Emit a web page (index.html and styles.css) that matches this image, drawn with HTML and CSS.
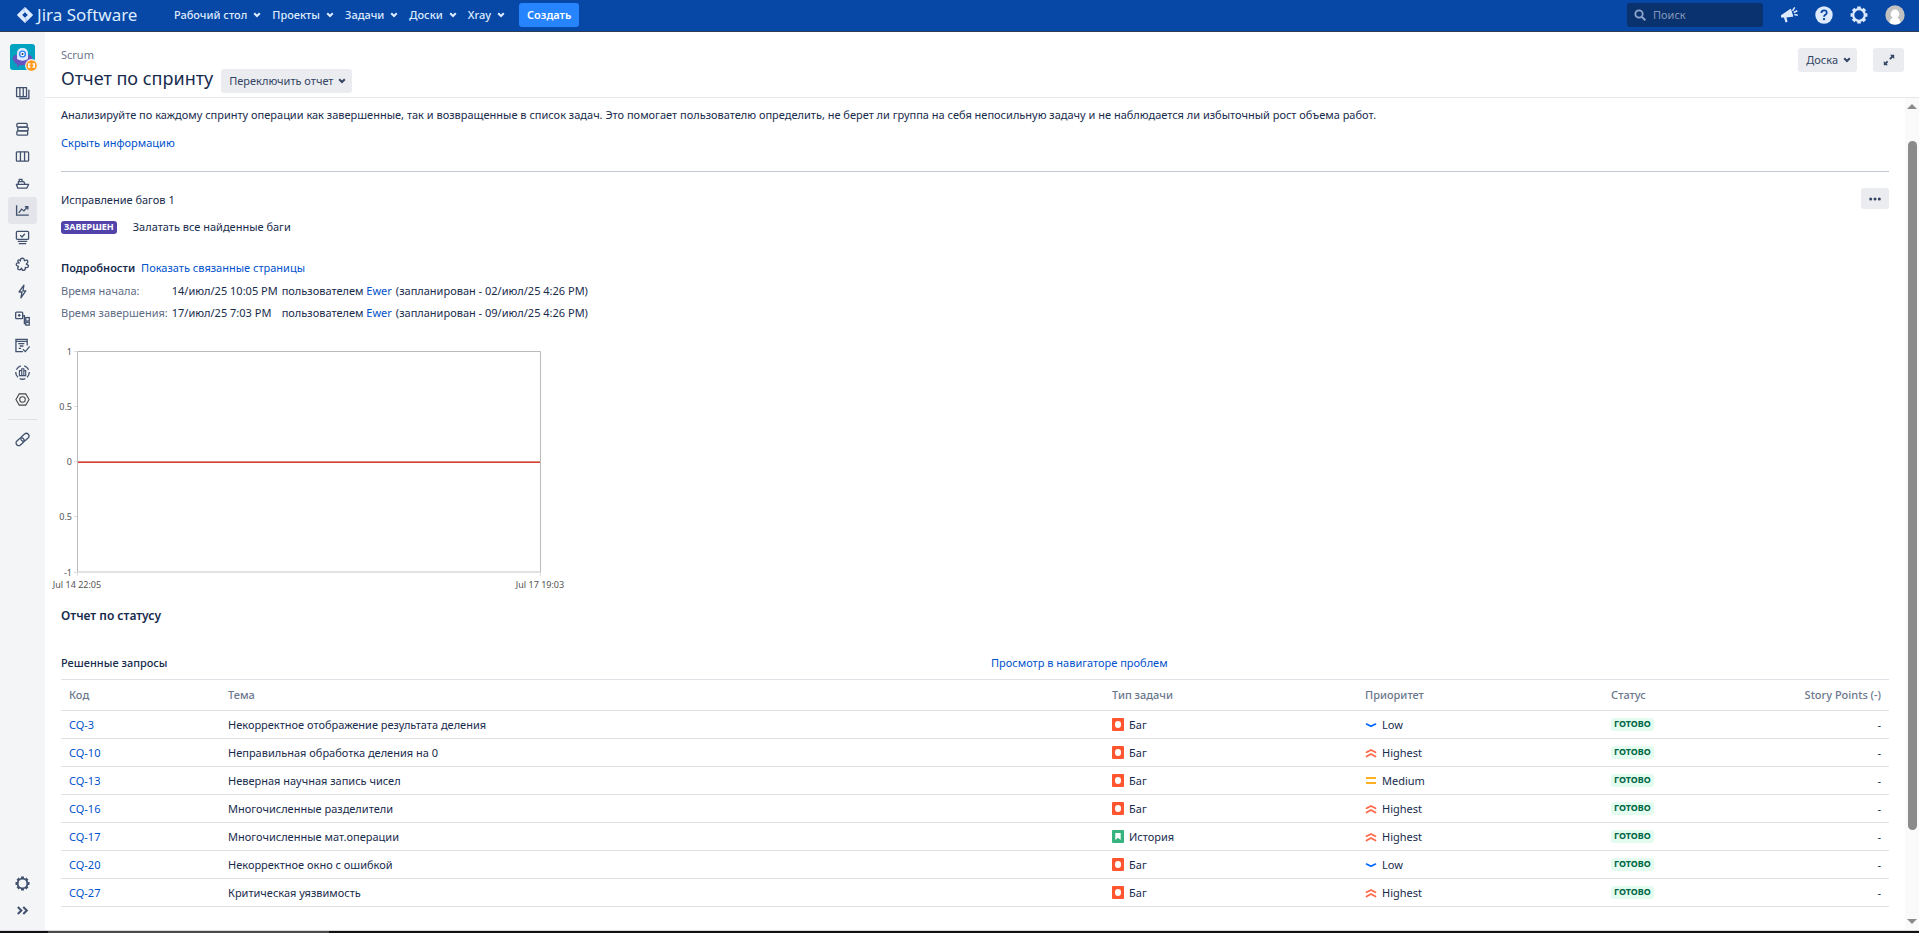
FILE: index.html
```html
<!DOCTYPE html>
<html lang="ru">
<head>
<meta charset="utf-8">
<title>Отчет по спринту - Jira Software</title>
<link rel="stylesheet" href="styles.css">
</head>
<body>
<svg class="defs" aria-hidden="true">
  <symbol id="chevron" viewBox="0 0 8 8"><path d="M1.2 2.2 4 5l2.800-2.800" fill="none" stroke="currentColor" stroke-width="2"/></symbol>
  <symbol id="bug" viewBox="0 0 12 13"><rect width="12" height="13" rx="1" fill="#ff5630"/><rect x="3" y="3" width="6" height="7" rx="3" fill="#fff"/></symbol>
  <symbol id="story" viewBox="0 0 12 13"><rect width="12" height="13" rx="1" fill="#36b37e"/><path d="M3.300 3h5.400v7L6 7.700 3.300 10z" fill="#fff"/></symbol>
  <symbol id="low" viewBox="0 0 12 12"><path d="M1.500 5 6 7.300 10.500 5" fill="none" stroke="#0065ff" stroke-width="1.600" stroke-linecap="round" stroke-linejoin="round"/></symbol>
  <symbol id="highest" viewBox="0 0 12 12"><path d="M1.500 5.300 6 2.900l4.500 2.400M1.500 9.500 6 7l4.500 2.500" fill="none" stroke="#ff6747" stroke-width="1.700" stroke-linecap="round" stroke-linejoin="round"/></symbol>
  <symbol id="medium" viewBox="0 0 12 12"><path d="M1 3h10M1 8h10" stroke="#ffb020" stroke-width="2"/></symbol>
  <symbol id="gear" viewBox="0 0 18 18"><circle cx="9" cy="9" r="5.800" fill="none" stroke="currentColor" stroke-width="2.200"/><g stroke="currentColor" stroke-width="3.600"><path d="M9 .6v2.200M9 15.200v2.200M.6 9h2.200M15.200 9h2.200M3.100 3.100l1.500 1.500M13.400 13.400l1.500 1.500M14.900 3.100l-1.500 1.500M4.600 13.400l-1.500 1.500"/></g></symbol>
</svg>

<header class="topbar">
  <a class="logo" href="#"><svg width="16" height="16" viewBox="0 0 16 16"><path fill="#deebff" fill-rule="evenodd" d="M8 0l7.500 7.300q.7.700 0 1.400L8 16 .5 8.700q-.7-.7 0-1.400zM8 5.200 5.200 8 8 10.800 10.800 8z"/><path d="M8 .5q-3 2.700 0 5M8 15.500q3-2.700 0-5" stroke="#8db3ee" fill="none" stroke-width=".8"/></svg><span>Jira Software</span></a>
  <nav class="menu">
    <button>Рабочий стол<svg><use href="#chevron"/></svg></button>
    <button>Проекты<svg><use href="#chevron"/></svg></button>
    <button>Задачи<svg><use href="#chevron"/></svg></button>
    <button>Доски<svg><use href="#chevron"/></svg></button>
    <button>Xray<svg><use href="#chevron"/></svg></button>
  </nav>
  <button class="create">Создать</button>
  <div class="tools">
    <label class="search"><svg viewBox="0 0 12 12"><circle cx="5" cy="5" r="3.700" fill="none" stroke="currentColor" stroke-width="1.800"/><path d="m8 8 3.300 3.300" stroke="currentColor" stroke-width="2"/></svg><input type="text" placeholder="Поиск" aria-label="Поиск"></label>
    <button class="tool" aria-label="Обратная связь"><svg viewBox="0 0 18 18"><path fill="currentColor" d="M1 9.200 10.200 3q.8-.4 1 .4l2 6.500q.1.800-.8.900l-6 .7 1.200 4.200-2 .7-1.700-4.800-2.200.2q-1.200-.800-.7-2.600z"/><path d="m12.500 4.800 2.200-3.400M13.700 6.500l3.600-1.700M14.300 8.500l3.500.8" stroke="currentColor" stroke-width="1.500"/></svg></button>
    <button class="tool" aria-label="Справка"><svg viewBox="0 0 18 18"><circle cx="9" cy="9" r="8.700" fill="currentColor"/><path d="M6.400 7q0-2.700 2.700-2.700T11.700 7c0 1.800-2.700 1.800-2.700 3.700" fill="none" stroke="#0747a6" stroke-width="1.800"/><circle cx="9" cy="13.100" r="1.200" fill="#0747a6"/></svg></button>
    <button class="tool" aria-label="Администрирование"><svg><use href="#gear"/></svg></button>
    <button class="tool user" aria-label="Профиль"><svg viewBox="0 0 20 20"><circle cx="10" cy="10" r="9.700" fill="#c1c1c1"/><circle cx="10" cy="9" r="4.400" fill="#fff"/><path d="M4.500 18q.5-4.500 3.500-5.500h4q3 1 3.500 5.500-5.500 3.200-11 0z" fill="#fff"/></svg></button>
  </div>
</header>

<div class="shell">
  <aside class="sidebar">
    <a class="project" href="#" aria-label="Scrum"><svg viewBox="0 0 25 26"><rect width="25" height="26" rx="3" fill="#00a3bf"/><path d="M2.500 14q1-4 10-4t10 4q-1 5-5 6.500l1 2-1.500.5-1.500-2q-3 .6-6 0L8 23l-1.500-.5 1-2q-4-1.500-5-6.500z" fill="#6554c0"/><path d="M7 15V9.500Q7 4 12.500 4T18 9.500V15q-5.500 3.500-11 0z" fill="#deebff"/><circle cx="12.500" cy="10" r="3.600" fill="#2684ff"/><circle cx="12.500" cy="10" r="2.200" fill="#fff"/><circle cx="12.500" cy="10" r="1" fill="#253858"/><circle cx="21.500" cy="21.500" r="6.400" fill="#f4f5f7"/><circle cx="21.500" cy="21.500" r="5.300" fill="#ff991f"/><path d="M20.500 20h-1.800v3h1.800M22.500 20h1.800v3h-1.800" fill="none" stroke="#fff"/></svg></a>
    <nav class="side-nav">
      <a class="boards" href="#" aria-label="Доски проекта"><svg viewBox="0 0 16 16"><path d="M1.700 1.700h10.600v9.600H1.700zM5.200 2v9M8.800 2v9M14.800 4v9.300H4.500" stroke-linejoin="round"/></svg></a>
      <a href="#" aria-label="Бэклог"><svg viewBox="0 0 16 16"><rect x="2" y="1.500" width="11" height="4" rx="1"/><rect x="3" y="5.500" width="11" height="4" rx="1"/><rect x="2" y="9.500" width="11.500" height="4.500" rx="1"/></svg></a>
      <a href="#" aria-label="Активные спринты"><svg viewBox="0 0 16 16"><rect x="1.500" y="3" width="13" height="10" rx="1"/><path d="M5.800 3v10M10.200 3v10"/></svg></a>
      <a href="#" aria-label="Релизы"><svg viewBox="0 0 16 16"><path d="M1.500 9h13l-2 4H3zM3.500 8.500V6h6l1 2.500M4.500 5.500v-2h3v2" stroke-linejoin="round"/></svg></a>
      <a class="active" href="#" aria-label="Отчеты"><svg viewBox="0 0 16 16"><path d="M1.700 2.500V13h13M4 10.500l3-4 2.500 2L13.500 4M10.500 4h3.200v3"/></svg></a>
      <a href="#" aria-label="Задачи"><svg viewBox="0 0 16 16"><rect x="1.500" y="1.500" width="13" height="8.500" rx="1"/><path d="m5.500 5.500 2 2 3-3.500M3 12.200h10M4 14.500h8"/></svg></a>
      <a href="#" aria-label="Дополнения"><svg viewBox="0 0 16 16"><path stroke-linejoin="round" d="M5.800 4.300Q5.500 1.300 7.800 1.300T10 4q3-1.300 3.600.3t-1.600 3.200q2.700.7 2.300 2.500t-3.300 1.200q.300 2.900-1.600 3.100T7 12q-1.800 2.400-3.400 1.400T3.800 10Q1 9.400 1.400 7.600t3-1.200Q2.300 4.400 3.400 3.400t2.400.9z"/></svg></a>
      <a href="#" aria-label="Автоматизация"><svg viewBox="0 0 16 16"><path stroke-linejoin="round" d="M9.500 1.300 4.300 8.500h3.200L6.300 14.700l5.200-7.400H8.500z"/></svg></a>
      <a href="#" aria-label="Компоненты"><svg viewBox="0 0 16 16"><rect x=".7" y="1.200" width="7.500" height="7" rx="1"/><path d="M3 4.700h3M4.500 3.200v3M8.500 5H10v8.500h1.300M10 9h1.300"/><rect x="11.500" y="7" width="3.700" height="3.700"/><rect x="11.500" y="12" width="3.700" height="3"/></svg></a>
      <a href="#" aria-label="Тесты"><svg viewBox="0 0 16 16"><path d="M13 8V1.500H1v13h7.500M1 3.500h12M3.500 6h6.500M5 8.500h4M4 11h2.500M8.500 12l2.500 2.500L15.700 9"/></svg></a>
      <a href="#" aria-label="Тестирование"><svg viewBox="0 0 16 16"><path d="M1.500 5Q3 1.800 6.200.900M9.800.900Q13 1.800 14.500 5M15.300 7.500q0 3.300-2.500 5.500M11 14.600q-3 1.200-6 0M3.200 13Q.7 10.800.7 7.500"/><path d="M4.700 11.300V6h2.500v5.300zM7.200 6V4h2.200v7.300H7.200M9.400 6h2v5.300h-2" stroke-width="1.200"/></svg></a>
      <a href="#" aria-label="Настройки модуля"><svg class="hex" viewBox="0 0 16 16"><path d="M4.500 2h7L15 8l-3.500 6h-7L1 8z"/><circle cx="8" cy="8" r="3"/></svg></a>
    </nav>
    <div class="side-link"><a href="#" aria-label="Ссылки"><svg viewBox="0 0 16 16"><g transform="rotate(-42 8 8)"><rect x="-.3" y="5.200" width="9.600" height="5.600" rx="2.800"/><rect x="6.700" y="5.200" width="9.600" height="5.600" rx="2.800"/></g></svg></a></div>
    <div class="side-foot">
      <a href="#" aria-label="Настройки проекта"><svg><use href="#gear"/></svg></a>
      <a href="#" aria-label="Развернуть"><svg viewBox="0 0 16 16"><path d="m3 4.200 3.800 3.800L3 11.800M8.800 4.200l3.800 3.800-3.800 3.800" stroke-width="2.200"/></svg></a>
    </div>
  </aside>

  <main class="page">
    <header class="page-head">
      <div>
        <a class="crumb" href="#">Scrum</a>
        <div class="title-row"><h1>Отчет по спринту</h1><button class="btn">Переключить отчет<svg><use href="#chevron"/></svg></button></div>
      </div>
      <div class="head-actions">
        <button class="btn">Доска<svg><use href="#chevron"/></svg></button>
        <button class="btn expand" aria-label="На весь экран"><svg viewBox="0 0 12 12"><path d="M7 .8h4.200V5L9.800 3.600 7.600 5.800 6.200 4.400l2.200-2.200zM.8 7v4.200H5L3.600 9.800l1.700-1.700-1.400-1.400-1.700 1.700z" fill="currentColor"/></svg></button>
      </div>
    </header>

    <div class="scroll">
      <div class="report">
        <section class="info">
          <p>Анализируйте по каждому спринту операции как завершенные, так и возвращенные в список задач. Это помогает пользователю определить, не берет ли группа на себя непосильную задачу и не наблюдается ли избыточный рост объема работ.</p>
          <a href="#">Скрыть информацию</a>
        </section>

        <section class="sprint">
          <div class="sprint-head"><h2>Исправление багов 1</h2><button class="btn more" aria-label="Действия"><svg viewBox="0 0 12 4"><circle cx="1.700" cy="2" r="1.500"/><circle cx="6" cy="2" r="1.500"/><circle cx="10.300" cy="2" r="1.500"/></svg></button></div>
          <div class="goal"><span class="badge closed">ЗАВЕРШЕН</span><span>Залатать все найденные баги</span></div>
          <div class="details-head"><strong>Подробности</strong><a href="#">Показать связанные страницы</a></div>
          <dl class="dates">
            <dt>Время начала:</dt><dd>14/июл/25 10:05 PM</dd><dd>пользователем <a href="#">Ewer</a></dd><dd>(запланирован - 02/июл/25 4:26 PM)</dd>
            <dt>Время завершения:</dt><dd>17/июл/25 7:03 PM</dd><dd>пользователем <a href="#">Ewer</a></dd><dd>(запланирован - 09/июл/25 4:26 PM)</dd>
          </dl>
        </section>

        <svg class="chart" width="514" height="248" viewBox="0 0 514 248" role="img" aria-label="График сгорания">
          <g stroke="#ddd"><path d="M21 8.500h3M21 63.500h3M21 118.500h3M21 173.500h3M21 229.500h3M24.500 229v4M487.500 229v4"/></g>
          <path d="M24 229h464" stroke="#e2e2e2" stroke-width="2"/>
          <path d="M24.500 229V8.500h463V229" fill="none" stroke="#bbb"/>
          <path d="M25 118.500h462" stroke="#d98a82"/>
          <path d="M25 119.500h462" stroke="#dc3b2f"/>
          <g class="y-labels"><text x="19" y="12">1</text><text x="19" y="67">0.5</text><text x="19" y="122">0</text><text x="19" y="177">0.5</text><text x="19" y="233">-1</text></g>
          <g class="x-labels"><text x="24" y="245">Jul 14 22:05</text><text x="487" y="245">Jul 17 19:03</text></g>
        </svg>

        <section class="status">
          <h2>Отчет по статусу</h2>
          <div class="table-head"><h3>Решенные запросы</h3><a href="#">Просмотр в навигаторе проблем</a></div>
          <table>
            <thead><tr><th class="c-key">Код</th><th class="c-name">Тема</th><th class="c-type">Тип задачи</th><th class="c-prio">Приоритет</th><th>Статус</th><th class="num">Story Points (-)</th></tr></thead>
            <tbody>
              <tr><td><a href="#">CQ-3</a></td><td>Некорректное отображение результата деления</td><td><span class="tag"><svg class="type"><use href="#bug"/></svg>Баг</span></td><td><span class="tag"><svg class="prio"><use href="#low"/></svg>Low</span></td><td><span class="badge done">ГОТОВО</span></td><td class="num">-</td></tr>
              <tr><td><a href="#">CQ-10</a></td><td>Неправильная обработка деления на 0</td><td><span class="tag"><svg class="type"><use href="#bug"/></svg>Баг</span></td><td><span class="tag"><svg class="prio"><use href="#highest"/></svg>Highest</span></td><td><span class="badge done">ГОТОВО</span></td><td class="num">-</td></tr>
              <tr><td><a href="#">CQ-13</a></td><td>Неверная научная запись чисел</td><td><span class="tag"><svg class="type"><use href="#bug"/></svg>Баг</span></td><td><span class="tag"><svg class="prio"><use href="#medium"/></svg>Medium</span></td><td><span class="badge done">ГОТОВО</span></td><td class="num">-</td></tr>
              <tr><td><a href="#">CQ-16</a></td><td>Многочисленные разделители</td><td><span class="tag"><svg class="type"><use href="#bug"/></svg>Баг</span></td><td><span class="tag"><svg class="prio"><use href="#highest"/></svg>Highest</span></td><td><span class="badge done">ГОТОВО</span></td><td class="num">-</td></tr>
              <tr><td><a href="#">CQ-17</a></td><td>Многочисленные мат.операции</td><td><span class="tag"><svg class="type"><use href="#story"/></svg>История</span></td><td><span class="tag"><svg class="prio"><use href="#highest"/></svg>Highest</span></td><td><span class="badge done">ГОТОВО</span></td><td class="num">-</td></tr>
              <tr><td><a href="#">CQ-20</a></td><td>Некорректное окно с ошибкой</td><td><span class="tag"><svg class="type"><use href="#bug"/></svg>Баг</span></td><td><span class="tag"><svg class="prio"><use href="#low"/></svg>Low</span></td><td><span class="badge done">ГОТОВО</span></td><td class="num">-</td></tr>
              <tr><td><a href="#">CQ-27</a></td><td>Критическая уязвимость</td><td><span class="tag"><svg class="type"><use href="#bug"/></svg>Баг</span></td><td><span class="tag"><svg class="prio"><use href="#highest"/></svg>Highest</span></td><td><span class="badge done">ГОТОВО</span></td><td class="num">-</td></tr>
            </tbody>
          </table>
        </section>
      </div>
      <div class="scrollbar" aria-hidden="true"><svg viewBox="0 0 10 5"><path d="M5 0l5 5H0z"/></svg><div class="rail"><div class="thumb"></div></div><svg viewBox="0 0 10 5"><path d="M0 0h10L5 5z"/></svg></div>
    </div>
  </main>
</div>
<div class="taskbar"><span></span></div>
</body>
</html>
```
FILE: styles.css
```css
* { box-sizing: border-box; }
body { margin: 0; height: 100vh; display: flex; flex-direction: column; overflow: hidden; background: #fff; color: #172b4d; font: 11px/16px "Noto Sans", sans-serif; }
a { color: #0052cc; text-decoration: none; }
button { font: inherit; border: 0; margin: 0; padding: 0; background: none; color: inherit; display: inline-flex; align-items: center; justify-content: center; cursor: pointer; }
h1, h2, h3, p, dl, dd { margin: 0; font-size: inherit; font-weight: 400; }
svg { display: block; flex: none; }
.defs { position: absolute; width: 0; height: 0; }

.topbar { display: flex; align-items: center; height: 32px; flex: none; padding: 0 14px 2px 17px; background: #0747a6; border-bottom: 1px solid #2e3d54; color: #deebff; }
.logo { display: flex; align-items: center; gap: 4px; width: 157px; color: #deebff; font-size: 17px; line-height: 20px; }
.menu { display: flex; gap: 11px; }
.menu button { gap: 6px; font-weight: 500; }
.menu svg, .btn > svg { width: 8px; height: 8px; }
.create { height: 24px; padding: 0 8px; margin-left: 14px; border-radius: 3px; background: #2684ff; color: #fff; font-weight: 600; }
.tools { display: flex; align-items: center; gap: 17px; margin-left: auto; }
.search { display: flex; align-items: center; gap: 7px; width: 136px; height: 24px; padding: 0 7px; border-radius: 3px; background: #0a326f; color: #8fa6cc; }
.search svg { width: 12px; height: 12px; }
.search input { flex: 1; min-width: 0; padding: 0; border: 0; outline: 0; background: none; color: inherit; font: inherit; }
.search input::placeholder { color: #8498ba; opacity: 1; }
.tool svg { width: 18px; height: 18px; }
.user svg { width: 20px; height: 20px; }

.shell { display: flex; flex: 1; min-height: 0; }
.sidebar { display: flex; flex-direction: column; align-items: center; width: 45px; flex: none; padding-top: 12px; background: #f4f5f7; color: #42526e; }
.sidebar a { display: flex; align-items: center; justify-content: center; width: 29px; height: 27px; border-radius: 3px; color: #42526e; }
.sidebar a svg { width: 15px; height: 15px; fill: none; stroke: currentColor; stroke-width: 1.4; }
.sidebar .project { height: 26px; }
.sidebar .project svg { width: 25px; height: 26px; stroke: none; overflow: visible; }
.side-nav { display: flex; flex-direction: column; padding-top: 10px; }
.side-nav .boards { margin-bottom: 9px; }
.side-nav .active { background: #e3e5ea; }
.sidebar .hex { stroke-width: 1.1; stroke: #444; }
.side-link { margin-top: 6px; padding-top: 6px; border-top: 1px solid #dfe1e6; }
.side-foot { margin-top: auto; padding-bottom: 6px; }

.page { display: flex; flex-direction: column; flex: 1; min-width: 0; }
.page-head { display: flex; justify-content: space-between; height: 66px; flex: none; padding: 15px 15px 0 16px; border-bottom: 1px solid #e6e7eb; }
.crumb { color: #6b778c; }
.title-row { display: flex; align-items: center; gap: 8px; margin-top: 6px; }
h1 { font-size: 18px; line-height: 24px; }
.title-row h1 { margin-top: -6px; }
.btn { height: 24px; padding: 0 6px 0 8px; gap: 5px; border-radius: 3px; background: #ebecf0; color: #344563; }
.head-actions { display: flex; gap: 16px; padding-top: 1px; }
.btn.expand { width: 31px; padding: 0; }
.btn.expand svg { width: 12px; height: 12px; }

.scroll { display: flex; flex: 1; min-height: 0; overflow: hidden; }
.report { flex: 1; min-width: 0; padding: 9px 16px 0; }
.info { padding-bottom: 20px; border-bottom: 1px solid #c1c7d0; }
.info p { margin-bottom: 12px; }
.sprint-head { display: flex; justify-content: space-between; align-items: center; margin-top: 16px; }
.sprint-head h2 { padding-top: 2px; }
.btn.more { width: 28px; height: 21px; padding: 0; }
.btn.more svg { width: 12px; height: 4px; fill: #344563; }
.badge { display: inline-block; height: 13px; padding: 0 3px; border-radius: 3px; font-size: 9px; line-height: 12px; font-weight: 700; }
.closed { background: #5243aa; color: #fff; }
.done { background: #e3fcef; color: #006644; }
.goal { display: flex; align-items: center; gap: 16px; margin-top: 10px; }
.details-head { display: flex; gap: 6px; margin-top: 25px; }
strong { font-weight: 600; }
.dates { display: grid; grid-template-columns: repeat(4, max-content); column-gap: 4px; row-gap: 6px; margin-top: 7px; }
.dates dt { color: #5e6c84; }
.chart { margin: 22px 0 0 -8px; overflow: visible; font-size: 9px; fill: #545454; }
.y-labels { text-anchor: end; }
.x-labels { text-anchor: middle; }
.status h2 { margin-top: 17px; font-size: 12px; font-weight: 600; }
.table-head { display: flex; gap: 8px; margin: 31px 0 8px; }
.table-head h3 { width: calc(50% + 8px); font-weight: 500; }
table { width: 100%; table-layout: fixed; border-collapse: collapse; border-top: 1px solid #dfe1e6; }
th, td { padding: 0 8px; height: 28px; border-bottom: 1px solid #dfe1e6; text-align: left; vertical-align: middle; }
th { height: 31px; color: #6b778c; font-weight: 500; }
.c-key { width: 8.7%; }
.c-name { width: 48.36%; }
.c-type { width: 13.84%; }
.c-prio { width: 13.46%; }
.num { text-align: right; }
.tag { display: flex; align-items: center; gap: 5px; }
.type { width: 12px; height: 13px; }
.prio { width: 12px; height: 12px; }
td .badge { display: block; width: max-content; }

.scrollbar { display: flex; flex-direction: column; align-items: center; width: 14px; flex: none; padding: 6px 0; background: #fafafa; }
.scrollbar svg { width: 10px; height: 5px; fill: #8b8b8b; }
.rail { flex: 1; width: 9px; padding: 32px 0 89px; }
.thumb { height: 100%; border-radius: 5px; background: #8b8b8b; }
.taskbar { display: flex; height: 3px; flex: none; padding-left: 48px; border-top: 1px solid #d8dae0; background: #111; }
.taskbar span { width: 15%; background: #4a4a4a; }
```
